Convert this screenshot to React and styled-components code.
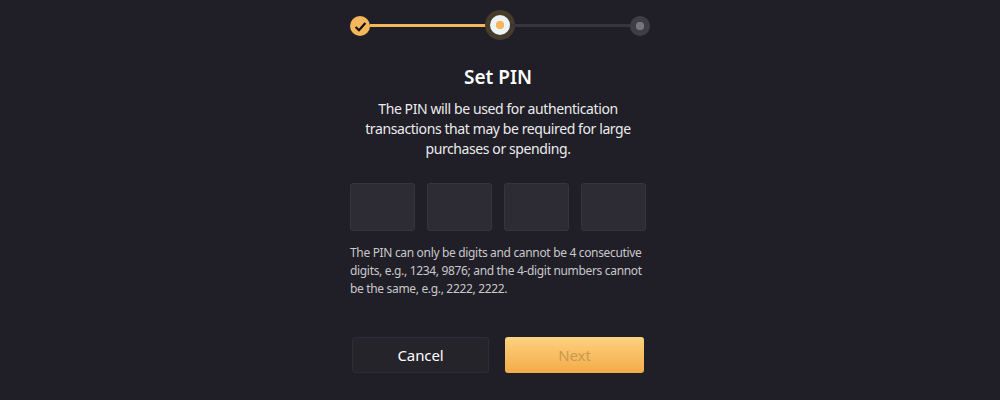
import styled, { createGlobalStyle } from "styled-components";

const GlobalStyle = createGlobalStyle`
    html, body {
        margin: 0;
        height: 400px;
        overflow: hidden;
        background: #201e26;
        font-family: "Noto Sans", "Open Sans", sans-serif;
    }
`;

const digits = [0, 1, 2, 3];

export default function App() {
    return (
        <>
            <GlobalStyle />
            <Page>
                <Stepper>
                    <DoneDot>
                        <svg width="13" height="13" viewBox="0 0 12 12" fill="none">
                            <path d="M1.5 6.5 L4.6 9.4 L10.5 2.8" stroke="#111015" strokeWidth="2" />
                        </svg>
                    </DoneDot>
                    <Line $active />
                    <CurrentDot />
                    <Line />
                    <TodoDot />
                </Stepper>
                <Title>Set PIN</Title>
                <Intro>
                    The PIN will be used for authentication
                    <br />
                    transactions that may be required for large
                    <br />
                    purchases or spending.
                </Intro>
                <PinRow>
                    {digits.map((d) => (
                        <PinBox key={d} />
                    ))}
                </PinRow>
                <Hint>
                    The PIN can only be digits and cannot be 4 consecutive
                    <br />
                    digits, e.g., 1234, 9876; and the 4-digit numbers cannot
                    <br />
                    be the same, e.g., 2222, 2222.
                </Hint>
                <Actions>
                    <CancelButton>Cancel</CancelButton>
                    <NextButton disabled>Next</NextButton>
                </Actions>
            </Page>
        </>
    );
}

const Page = styled.div`
    width: 300px;
    margin: 0 auto;
    padding-top: 10px;
    display: flex;
    flex-direction: column;
    color: #fff;
`;

const Stepper = styled.div`
    display: flex;
    align-items: center;
    height: 30px;
`;

const DoneDot = styled.div`
    width: 20px;
    height: 20px;
    flex: none;
    border-radius: 50%;
    background: #f5b75c;
    display: flex;
    align-items: center;
    justify-content: center;
    position: relative;
    top: 1px;
`;

const Line = styled.div`
    flex: 1;
    height: 3px;
    background: ${(p) => (p.$active ? "#f5b75c" : "#37363d")};
`;

const CurrentDot = styled.div`
    width: 20px;
    height: 20px;
    flex: none;
    box-sizing: border-box;
    border-radius: 50%;
    background: radial-gradient(circle, #f5b75c 0 4px, #eef3f8 4.5px);
    box-shadow: 0 0 0 5px #473b2b;
`;

const TodoDot = styled.div`
    width: 20px;
    height: 20px;
    flex: none;
    border-radius: 50%;
    background: radial-gradient(circle, #77767c 0 4px, #3f3e45 4.5px);
    position: relative;
    top: 1px;
`;

const Title = styled.h1`
    margin: 23px 4px 0 0;
    font-size: 19px;
    line-height: 28px;
    font-weight: 600;
    text-align: center;
`;

const Intro = styled.p`
    margin: 8px -6px 0 -10px;
    font-size: 14px;
    line-height: 20px;
    letter-spacing: -0.4px;
    text-align: center;
    color: #ececee;
`;

const PinRow = styled.div`
    display: flex;
    gap: 12px;
    margin-top: 24px;
`;

const PinBox = styled.div`
    width: 65px;
    height: 48px;
    box-sizing: border-box;
    border: 1px solid #37353c;
    border-radius: 3px;
    background: #2d2b33;
`;

const Hint = styled.p`
    margin: 13px -10px 0 0;
    font-size: 12px;
    line-height: 18px;
    letter-spacing: -0.33px;
    color: #c9c8cc;
    white-space: nowrap;
`;

const Actions = styled.div`
    display: flex;
    justify-content: space-between;
    margin: 39px 6px 0 2px;
`;

const CancelButton = styled.button`
    width: 137px;
    height: 36px;
    box-sizing: border-box;
    border: 1px solid #2f2d34;
    border-radius: 3px;
    background: #26242b;
    color: #fff;
    font: 400 15px "Noto Sans", sans-serif;
    letter-spacing: -0.1px;
`;

const NextButton = styled.button`
    width: 139px;
    height: 36px;
    border: none;
    border-radius: 3px;
    background: linear-gradient(180deg, #fdd27f, #f3ab48);
    color: #c9994f;
    font: 400 15px "Noto Sans", sans-serif;
    letter-spacing: -0.1px;
`;
